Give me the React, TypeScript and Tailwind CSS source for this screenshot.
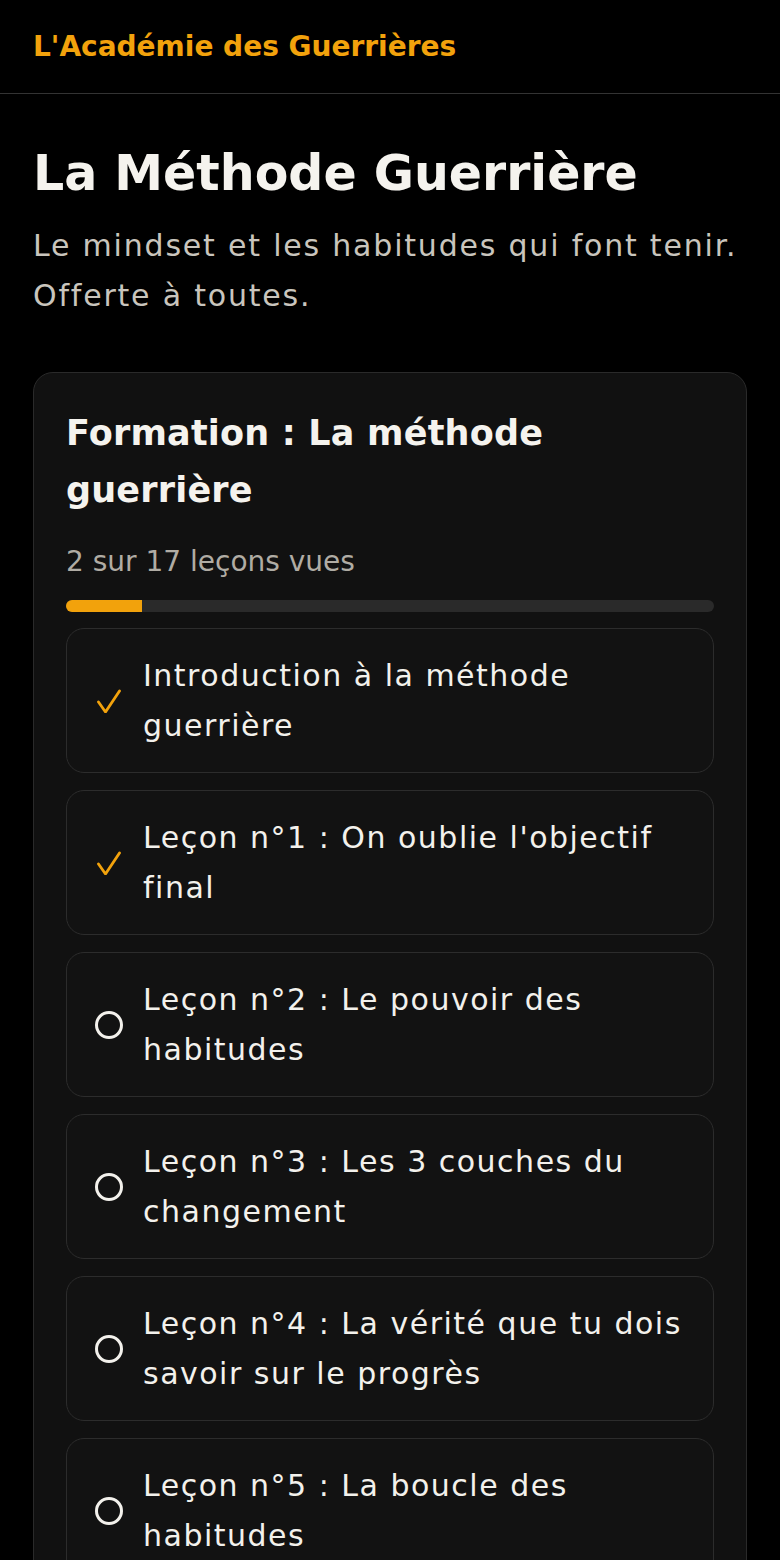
import React from 'react';

type Lesson = { title: string; done: boolean };

const lessons: Lesson[] = [
  { title: 'Introduction à la méthode guerrière', done: true },
  { title: "Leçon n°1 : On oublie l'objectif final", done: true },
  { title: 'Leçon n°2 : Le pouvoir des habitudes', done: false },
  { title: 'Leçon n°3 : Les 3 couches du changement', done: false },
  { title: 'Leçon n°4 : La vérité que tu dois savoir sur le progrès', done: false },
  { title: 'Leçon n°5 : La boucle des habitudes', done: false },
];

const font = { fontFamily: '"DejaVu Sans", "Noto Sans", sans-serif' };

function LessonRow({ lesson }: { lesson: Lesson }) {
  return (
    <div className="flex items-center gap-5 rounded-[18px] border border-[#2c2c2c] bg-[#121212] py-[21.5px] pl-7 pr-6">
      <div className="flex w-7 shrink-0 justify-center">
        {lesson.done ? (
          <svg width="24" height="24" viewBox="0 0 24 24" fill="none" stroke="#f2a20c" strokeWidth="2.8" strokeLinecap="round" strokeLinejoin="round">
            <path d="M1.5 13 L8.5 23 L22.5 2" />
          </svg>
        ) : (
          <span className="block h-7 w-7 rounded-full border-[3px] border-[#f3f1ec]" />
        )}
      </div>
      <span className="text-[30px] leading-[50px] tracking-[1.5px] text-[#f3f1ec]">{lesson.title}</span>
    </div>
  );
}

export default function App() {
  const seen = 2;
  const total = 17;

  return (
    <div className="min-h-screen bg-black" style={font}>
      <header className="flex h-[94px] items-center border-b border-[#333] px-[33px]">
        <span className="text-[28px] font-bold text-[#f2a20c]">L'Académie des Guerrières</span>
      </header>

      <main className="px-[33px] pt-[51px]">
        <h1 className="text-[49px] font-bold leading-[58px] text-[#f5f3ee]">La Méthode Guerrière</h1>
        <p className="mt-[18px] text-[30px] leading-[50px] tracking-[1.8px] text-[#c9c5bd]">
          Le mindset et les habitudes qui font tenir. Offerte à toutes.
        </p>

        <section className="mt-[51px] rounded-[20px] border border-[#2a2a2a] bg-[#111] px-8 pt-8 pb-8">
          <h2 className="text-[35px] font-bold leading-[57px] tracking-[0.2px] text-[#f5f3ee]">
            Formation : La méthode guerrière
          </h2>
          <p className="mt-[22px] text-[28px] leading-[42px] text-[#b0aca4]">
            {seen} sur {total} leçons vues
          </p>
          <div className="mt-[17px] h-3 overflow-hidden rounded-full bg-[#2a2a2a]">
            <div className="h-full bg-[#f2a20c]" style={{ width: `${(seen / total) * 100}%` }} />
          </div>

          <div className="mt-4 flex flex-col gap-[17px]">
            {lessons.map((l) => (
              <LessonRow key={l.title} lesson={l} />
            ))}
          </div>
        </section>
      </main>
    </div>
  );
}
